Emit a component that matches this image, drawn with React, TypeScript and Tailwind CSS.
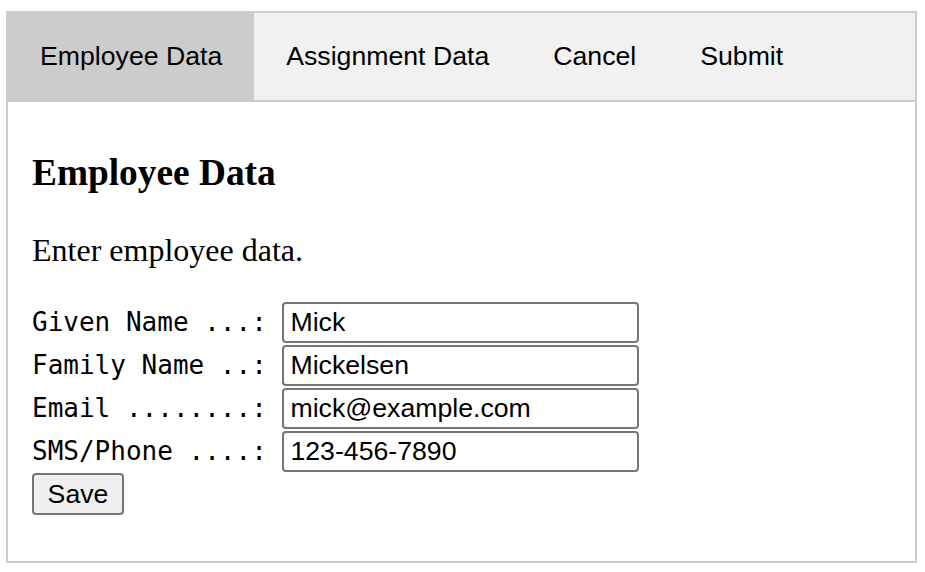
import { useState } from "react";

const tabs = ["Employee Data", "Assignment Data", "Cancel", "Submit"];

const fields = [
  { label: "Given Name ...: ", value: "Mick" },
  { label: "Family Name ..: ", value: "Mickelsen" },
  { label: "Email ........: ", value: "mick@example.com" },
  { label: "SMS/Phone ....: ", value: "123-456-7890" },
];

export default function App() {
  const [active, setActive] = useState(0);
  const [values, setValues] = useState(fields.map((f) => f.value));

  return (
    <div className="min-h-screen bg-white text-black pt-[11px] pl-[6px]">
      <div className="w-[911px]">
        <div className="flex border-2 border-[#ccc] bg-[#f1f1f1]">
          {tabs.map((t, i) => (
            <button
              key={t}
              onClick={() => setActive(i)}
              className={
                "px-[32px] py-[28px] text-[26.67px] leading-[normal] font-['Liberation_Sans',Arial,sans-serif] " +
                (i === active ? "bg-[#ccc]" : "bg-[#f1f1f1] hover:bg-[#ddd]")
              }
            >
              {t}
            </button>
          ))}
        </div>

        <div className="border-2 border-t-0 border-[#ccc] px-[24px] pt-[12px] pb-[46px] font-['Liberation_Serif','Times_New_Roman',serif]">
          <h3 className="mt-[37.4px] text-[37.33px] font-bold leading-[normal]">Employee Data</h3>
          <p className="mt-[37.4px] text-[32px] leading-[normal]">Enter employee data.</p>

          <form className="mt-[33.5px]" onSubmit={(e) => e.preventDefault()}>
            {fields.map((f, i) => (
              <div key={f.label} className={"flex items-center " + (i < fields.length - 1 ? "mb-[2px]" : "")}>
                <span className="whitespace-pre text-[26px] leading-[normal] -mt-[2px] font-['DejaVu_Sans_Mono',monospace]">
                  {f.label}
                </span>
                <input
                  value={values[i]}
                  onChange={(e) => {
                    const next = [...values];
                    next[i] = e.target.value;
                    setValues(next);
                  }}
                  className="w-[357px] h-[41px] pl-[6px] pr-[4px] border-2 border-[#767676] rounded-[4px] bg-white text-[26.67px] leading-[normal] font-['Liberation_Sans',Arial,sans-serif]"
                />
              </div>
            ))}
            <button
              type="submit"
              className="mt-[1px] w-[92px] h-[42px] border-2 border-[#767676] rounded-[4px] bg-[#efefef] text-[26.67px] leading-[normal] font-['Liberation_Sans',Arial,sans-serif]"
            >
              Save
            </button>
          </form>
        </div>
      </div>
    </div>
  );
}
